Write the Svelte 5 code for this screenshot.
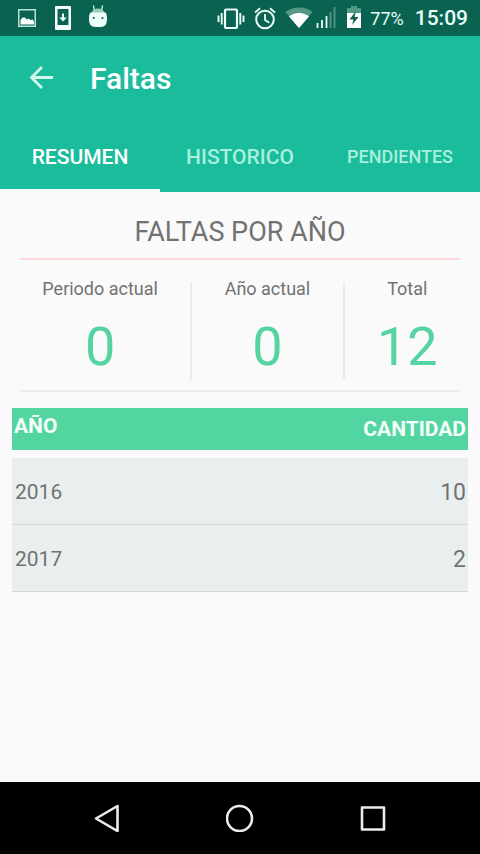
<script lang="ts">
	type Stat = { label: string; value: number };
	type Row = { year: number; count: number };

	const tabs = [
		{ id: 'resumen', label: 'RESUMEN' },
		{ id: 'historico', label: 'HISTORICO' },
		{ id: 'pendientes', label: 'PENDIENTES', small: true }
	];

	const stats: Stat[] = [
		{ label: 'Periodo actual', value: 0 },
		{ label: 'Año actual', value: 0 },
		{ label: 'Total', value: 12 }
	];

	const rows: Row[] = [
		{ year: 2016, count: 10 },
		{ year: 2017, count: 2 }
	];

	let current = $state('resumen');
</script>

<div class="screen">
	<div class="status-bar">
		<div class="notifications" aria-hidden="true">
			<svg width="20" height="26" viewBox="0 0 20 26">
				<rect x="1.75" y="4.75" width="16.5" height="16.5" fill="none" stroke="#b9e4d8" stroke-width="1.5" />
				<path d="M3.500 19.500v-4.500l2-2.500h2.500l1.500 2 2-1 2 1.500 2-.5 1.500 2v3z" fill="#fff" />
			</svg>
			<svg width="16" height="26" viewBox="0 0 16 26">
				<path d="M1 1h14q1 0 1 1v22q0 1-1 1H1q-1 0-1-1V2q0-1 1-1zM2.500 4v16h11V4z" fill="#f4fffb" fill-rule="evenodd" />
				<path d="M7 8.500h2v4h2.800L8 16.500l-3.800-4H7z" fill="#f4fffb" />
			</svg>
			<svg width="18" height="26" viewBox="0 0 18 26">
				<path d="M4.500 1l1 5M13.500 1l-1 5" stroke="#c9f0e4" stroke-width="1.300" stroke-linecap="round" />
				<path d="M2.500 8Q3.500 3.500 9 3.500T15.500 8z" fill="#9dcdbd" />
				<path d="M1.500 7.500h15q1.500 1.500 1.500 6 0 5-2 7-1.500 1.500-7 1.500t-7-1.500q-2-2-2-7 0-4.500 1.500-6z" fill="#ecfff9" />
				<circle cx="4.800" cy="13" r="1.100" fill="#0a6350" />
				<circle cx="13.500" cy="13" r="1.100" fill="#0a6350" />
			</svg>
		</div>

		<div class="system">
			<svg width="28" height="26" viewBox="0 0 28 26" aria-hidden="true">
				<rect x="8" y="4.500" width="12" height="18.500" rx="1" fill="none" stroke="#e9fff8" stroke-width="2.200" />
				<path d="M4.700 8v11.500M23.300 8v11.500M1.500 10.500v6.500M26.500 10.500v6.500" stroke="#e9fff8" stroke-width="1.900" />
			</svg>
			<svg width="22" height="26" viewBox="0 0 22 26" aria-hidden="true">
				<circle cx="11" cy="14.500" r="8.800" fill="none" stroke="#e9fff8" stroke-width="2" />
				<path d="M1 7.500l5-4.300M21 7.500l-5-4.300M11 9v6l4.300 2.700" fill="none" stroke="#e9fff8" stroke-width="1.800" />
			</svg>
			<div class="reception">
				<svg width="28" height="26" viewBox="0 0 28 26" aria-hidden="true">
					<path d="M14 23L.5 7Q6 2.500 14 2.500T27.500 7z" fill="#559787" />
					<path d="M14 23L4 11.500Q8 8 14 8t10 3.500z" fill="#fff" />
				</svg>
				<svg width="20" height="26" viewBox="0 0 20 26" aria-hidden="true">
					<path d="M1.500 18v5M6 15v8M10.500 11v12" stroke="#e9fff8" stroke-width="1.800" />
					<path d="M14.500 7v16M18.500 2v21" stroke="#559787" stroke-width="1.800" />
				</svg>
			</div>
			<svg class="battery" width="14" height="26" viewBox="0 0 14 26" aria-hidden="true">
				<path d="M4 1h6v2h4v6H0V3h4z" fill="#559787" />
				<path d="M0 8h14v15H0z" fill="#fff" />
				<path d="M9 6l-6.500 8.500h4L5 20l6.500-8h-4z" fill="#0a6350" />
			</svg>
			<span class="charge">77%</span>
			<time class="clock">15:09</time>
		</div>
	</div>

	<header class="app-header">
		<div class="toolbar">
			<button type="button" class="back" aria-label="Volver">
				<svg width="26" height="26" viewBox="0 0 26 26" aria-hidden="true">
					<path d="M25 12.500H4M14 2L3.500 12.500 14 23" fill="none" stroke="#d5f8ec" stroke-width="2.800" />
				</svg>
			</button>
			<h1>Faltas</h1>
		</div>

		<div class="tabs" role="tablist">
			{#each tabs as tab (tab.id)}
				<button
					type="button"
					role="tab"
					class="tab"
					class:small={tab.small}
					class:active={current === tab.id}
					aria-selected={current === tab.id}
					onclick={() => (current = tab.id)}
				>
					{tab.label}
				</button>
			{/each}
		</div>
	</header>

	<main>
		<h2>FALTAS POR AÑO</h2>

		<div class="stats">
			{#each stats as stat (stat.label)}
				<div class="stat">
					<span class="label">{stat.label}</span>
					<span class="value">{stat.value}</span>
				</div>
			{/each}
		</div>
		<hr />

		<table>
			<thead>
				<tr>
					<th scope="col">AÑO</th>
					<th scope="col">CANTIDAD</th>
				</tr>
			</thead>
			<tbody>
				{#each rows as row (row.year)}
					<tr>
						<td>{row.year}</td>
						<td>{row.count}</td>
					</tr>
				{/each}
			</tbody>
		</table>
	</main>

	<nav class="nav-bar" aria-label="Sistema">
		<button type="button" aria-label="Atrás">
			<svg width="28" height="28" viewBox="0 0 28 28" aria-hidden="true">
				<path d="M24.500 2v25L3 14.500z" />
			</svg>
		</button>
		<button type="button" aria-label="Inicio">
			<svg width="28" height="28" viewBox="0 0 28 28" aria-hidden="true">
				<circle cx="13.500" cy="14.500" r="12.500" />
			</svg>
		</button>
		<button type="button" aria-label="Recientes">
			<svg width="28" height="28" viewBox="0 0 28 28" aria-hidden="true">
				<rect x="3" y="3.500" width="22" height="22" />
			</svg>
		</button>
	</nav>
</div>

<style>
	:global(body) {
		margin: 0;
	}

	.screen {
		display: flex;
		flex-direction: column;
		min-height: 100vh;
		background: #fafafa;
		color: #727272;
		font-family: Roboto, 'Noto Sans', sans-serif;
	}

	svg {
		display: block;
		flex-shrink: 0;
	}

	button {
		border: 0;
		padding: 0;
		background: transparent;
		font-family: inherit;
		cursor: pointer;
	}

	.status-bar {
		display: flex;
		justify-content: space-between;
		align-items: center;
		height: 36px;
		padding: 0 12px 0 17px;
		background: #0a6350;
		color: #e9fff8;
	}

	.notifications {
		display: flex;
		align-items: center;
		gap: 18px;
	}

	.system {
		display: flex;
		align-items: center;
		gap: 9px;
	}

	.reception {
		display: flex;
		gap: 3px;
	}

	.battery {
		margin-left: 2px;
	}

	.charge {
		font-size: 18px;
	}

	.clock {
		margin-left: 2px;
		font-size: 21px;
		font-weight: 500;
	}

	.app-header {
		background: #1abc9c;
	}

	.toolbar {
		display: flex;
		align-items: center;
		gap: 36px;
		height: 84px;
		padding: 0 28px;
	}

	h1 {
		margin: 0;
		font-size: 30px;
		font-weight: 500;
		color: #fff;
	}

	.tabs {
		display: flex;
		height: 72px;
	}

	.tab {
		flex: 1;
		border-top: 4px solid transparent;
		border-bottom: 3px solid transparent;
		font-size: 21px;
		font-weight: 500;
		color: #a9f0dc;
	}

	.tab.small {
		font-size: 18px;
	}

	.tab.active {
		border-bottom-color: #fafafa;
		color: #fff;
	}

	main {
		flex: 1;
		padding: 20px 12px;
	}

	h2 {
		margin: 0 8px;
		padding-bottom: 6px;
		border-bottom: 2px solid #f8d8d6;
		font-size: 27px;
		font-weight: 400;
		line-height: 40px;
		text-align: center;
	}

	.stats {
		display: flex;
		margin: 0 -2px;
		padding: 22px 0 10px;
	}

	.stat {
		display: flex;
		flex: 1 1 auto;
		flex-direction: column;
		align-items: center;
		height: 98px;
	}

	.stat + .stat {
		border-left: 2px solid #ebebeb;
	}

	.label {
		font-size: 18px;
		line-height: 14px;
	}

	.value {
		margin-top: 19px;
		font-size: 54px;
		line-height: 64px;
		color: #55d3a1;
	}

	hr {
		height: 2px;
		margin: 0 8px 16px;
		border: 0;
		background: #ebebeb;
	}

	table {
		width: 100%;
		border-spacing: 0;
	}

	th {
		height: 42px;
		padding: 0 2px;
		background: #53d5a1;
		font-size: 21px;
		font-weight: 700;
		line-height: 36px;
		text-align: left;
		vertical-align: top;
		color: #f4fffa;
	}

	th:last-child {
		line-height: 42px;
	}

	tbody::before {
		content: '';
		display: block;
		height: 8px;
	}

	td {
		height: 64px;
		padding: 2px 3px 0;
		border-bottom: 1px solid #d0dbdb;
		background: #e9efef;
		font-size: 21px;
	}

	th:last-child,
	td:last-child {
		padding-right: 2px;
		text-align: right;
	}

	td:last-child {
		font-size: 23px;
	}

	.nav-bar {
		display: flex;
		height: 72px;
		padding: 0 40px;
		background: #000;
	}

	.nav-bar button {
		display: grid;
		flex: 1;
		place-items: center;
	}

	.nav-bar svg {
		fill: none;
		stroke: #ececec;
		stroke-width: 2.6px;
		stroke-linejoin: round;
	}
</style>
